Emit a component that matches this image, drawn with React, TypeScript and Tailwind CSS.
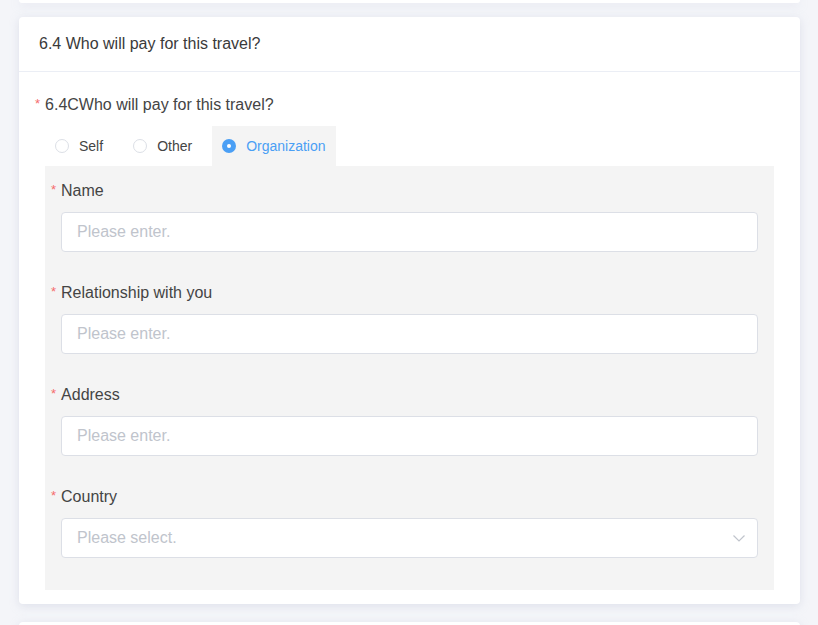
const fields = [
  { label: "Name", placeholder: "Please enter.", select: false },
  { label: "Relationship with you", placeholder: "Please enter.", select: false },
  { label: "Address", placeholder: "Please enter.", select: false },
  { label: "Country", placeholder: "Please select.", select: true },
]

function Radio({ label, checked }: { label: string; checked?: boolean }) {
  return (
    <label
      className={`flex items-center h-10 cursor-pointer pl-[10px] ${
        checked ? "bg-[#f4f4f4] pr-[10px] text-[#4a9ff5]" : "pr-[20px] text-[#444]"
      }`}
    >
      {checked ? (
        <span className="w-[14px] h-[14px] rounded-full bg-[#4a9ff5] flex items-center justify-center">
          <span className="w-[4px] h-[4px] rounded-full bg-white" />
        </span>
      ) : (
        <span className="w-[14px] h-[14px] rounded-full border border-[#dcdfe6] bg-white" />
      )}
      <span className="ml-[10px] text-[14px]">{label}</span>
    </label>
  )
}

export default function App() {
  return (
    <div className="bg-[#f4f5f9] pl-[19px] pr-[18px] font-['Liberation_Sans',Arial,sans-serif] overflow-hidden h-[625px]">
      <div className="h-[3px] bg-white rounded-b shadow-[0_2px_10px_rgba(180,185,205,0.35)]" />

      <div className="mt-[14px] bg-white rounded shadow-[0_2px_10px_rgba(180,185,205,0.35)]">
        <div className="h-[55px] flex items-center px-5 border-b border-[#ebeef5] text-[16px] text-[#3a3a3a]">
          6.4 Who will pay for this travel?
        </div>

        <div className="pt-[23px] pl-4 pr-[26px] pb-[14px]">
          <div className="flex items-center text-[16px] text-[#444] h-5">
            <span className="text-[#f56c6c] text-[13px] mr-[5px] mt-[-3px]">*</span>
            6.4CWho will pay for this travel?
          </div>

          <div className="flex mt-[2px] ml-[10px] pt-[9px]">
            <Radio label="Self" />
            <Radio label="Other" />
            <Radio label="Organization" checked />
          </div>

          <div className="ml-[10px] bg-[#f4f4f4] pl-[6px] pr-4 pt-[15px] pb-[32px]">
            {fields.map((f) => (
              <div key={f.label} className="mb-[31px] last:mb-0">
                <div className="flex items-center h-5 text-[16px] text-[#444]">
                  <span className="text-[#f56c6c] text-[13px] mr-[5px] mt-[-3px]">*</span>
                  {f.label}
                </div>
                <div className="mt-[11px] ml-[10px] h-10 bg-white border border-[#dcdfe6] rounded flex items-center pl-[15px] pr-[12px] text-[16px] text-[#c0c4cc]">
                  <span className="flex-1">{f.placeholder}</span>
                  {f.select && (
                    <svg width="12" height="7" viewBox="0 0 12 7" fill="none">
                      <polyline points="0.5,0.5 6,6 11.5,0.5" stroke="#c0c4cc" strokeWidth="1.2" />
                    </svg>
                  )}
                </div>
              </div>
            ))}
          </div>
        </div>
      </div>

      <div className="mt-[18px] h-10 bg-white rounded shadow-[0_2px_10px_rgba(180,185,205,0.35)]" />
    </div>
  )
}
